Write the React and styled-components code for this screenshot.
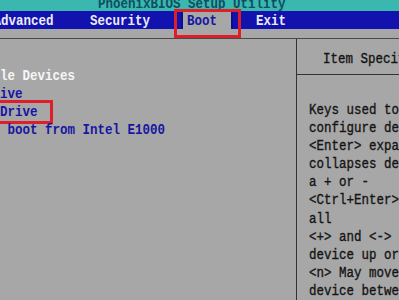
import React from 'react'
import styled, { createGlobalStyle } from 'styled-components'

const GlobalStyle = createGlobalStyle`
  html, body {
    margin: 0;
    padding: 0;
    background: #a7a7a7;
  }
`

const colors = {
  teal: '#3ab7ae',
  blue: '#1212ae',
  gray: '#a7a7a7',
  ink: '#141414',
  itemBlue: '#1616a2',
  red: '#de1f2a'
}

const helpLines = [
  'Keys used to view or',
  'configure devices:',
  '<Enter> expands or',
  'collapses devices with',
  'a + or -',
  '<Ctrl+Enter> expands',
  'all',
  '<+> and <-> moves the',
  'device up or down.',
  '<n> May move removable',
  'device between Hard'
]

const bootItems = [
  { label: '+Removable Devices', selected: true },
  { label: ' Hard Drive' },
  { label: ' CD-ROM Drive', marked: true },
  { label: ' Network boot from Intel E1000' }
]

const menu = [
  { label: 'Advanced', gap: 36.5 },
  { label: 'Security', gap: 31 },
  { label: 'Boot', gap: 23, active: true },
  { label: 'Exit', gap: 0 }
]

const Screen = styled.div`
  width: 399px;
  height: 300px;
  overflow: hidden;
  display: flex;
  flex-direction: column;
  background: ${colors.gray};
  font-family: "Liberation Mono", "DejaVu Sans Mono", monospace;
  font-size: 12.5px;
  font-weight: bold;
  white-space: pre;
`

// VGA text glyphs are taller than a TrueType mono font at the same width
const Txt = styled.span`
  display: inline-block;
  transform: scaleY(1.22);
  transform-origin: 50% 55%;
`

const TitleBar = styled.div`
  height: 11px;
  flex: none;
  overflow: hidden;
  background: ${colors.teal};
  color: #0e4e62;
  line-height: 12.5px;
  padding-left: 98px;
  ${Txt} {
    display: block;
    margin-top: -1px;
  }
`

const MenuBar = styled.div`
  height: 18px;
  flex: none;
  display: flex;
  align-items: center;
  background: ${colors.blue};
  line-height: 18px;
  margin-left: -6.5px;
  ${Txt} {
    transform: translateY(1.5px) scaleY(1.22);
  }
`

const MenuItem = styled.div`
  position: relative;
  color: ${(p) => (p.$active ? colors.itemBlue : '#ececf4')};
  background: ${(p) => (p.$active ? colors.gray : 'transparent')};
  margin-right: ${(p) => p.$gap}px;
  padding: ${(p) => (p.$active ? '0 14px 0 4px' : '0')};
  border-left: ${(p) => (p.$active ? '2px solid #0c0c8c' : 'none')};
  border-right: ${(p) => (p.$active ? '2px solid #0c0c8c' : 'none')};

  ${(p) => p.$active && `
    &::after {
      content: '';
      position: absolute;
      left: -9px;
      right: -10px;
      top: -2px;
      bottom: -9px;
      border: 3px solid ${colors.red};
    }
  `}
`

const Gap = styled.div`
  height: 9px;
  flex: none;
  border-bottom: 1px solid #4a4a4a;
`

const Body = styled.div`
  flex: 1;
  display: flex;
  min-height: 0;
`

const BootList = styled.div`
  width: 296px;
  flex: none;
  border-right: 1px solid #333;
  padding-top: 29px;
  display: flex;
  flex-direction: column;
`

const BootItem = styled.div`
  line-height: 18px;
  height: 18px;
  color: ${(p) => (p.$selected ? '#f6f6f6' : colors.itemBlue)};
  margin-left: -60px;
`

const Marked = styled.span`
  position: relative;
  display: inline-block;
  line-height: 18px;
  height: 18px;
  &::after {
    content: '';
    position: absolute;
    left: -10px;
    right: -15.5px;
    top: -4px;
    bottom: -2px;
    border: 3px solid ${colors.red};
  }
`

const HelpPanel = styled.div`
  flex: 1;
  display: flex;
  flex-direction: column;
  color: ${colors.ink};
`

const HelpHeader = styled.div`
  height: 36px;
  flex: none;
  box-sizing: border-box;
  display: flex;
  align-items: center;
  padding: 4px 0 0 26px;
  border-bottom: 1px solid #333;
  font-weight: normal;
  -webkit-text-stroke: 0.3px ${colors.ink};
`

const HelpText = styled.div`
  padding: 27px 0 0 12px;
  display: flex;
  flex-direction: column;
  font-weight: normal;
  -webkit-text-stroke: 0.3px ${colors.ink};
`

const HelpLine = styled.div`
  line-height: 18.1px;
  height: 18.1px;
`

export default function App() {
  return (
    <>
      <GlobalStyle />
      <Screen>
        <TitleBar>
          <Txt>PhoenixBIOS Setup Utility</Txt>
        </TitleBar>
        <MenuBar>
          {menu.map((m) => (
            <MenuItem key={m.label} $active={m.active} $gap={m.gap}>
              <Txt>{m.label}</Txt>
            </MenuItem>
          ))}
        </MenuBar>
        <Gap />
        <Body>
          <BootList>
            {bootItems.map((item) => (
              <BootItem key={item.label} $selected={item.selected}>
                {item.marked ? (
                  <Marked><Txt>{item.label}</Txt></Marked>
                ) : (
                  <Txt>{item.label}</Txt>
                )}
              </BootItem>
            ))}
          </BootList>
          <HelpPanel>
            <HelpHeader><Txt>Item Specific Help</Txt></HelpHeader>
            <HelpText>
              {helpLines.map((line) => (
                <HelpLine key={line}><Txt>{line}</Txt></HelpLine>
              ))}
            </HelpText>
          </HelpPanel>
        </Body>
      </Screen>
    </>
  )
}
